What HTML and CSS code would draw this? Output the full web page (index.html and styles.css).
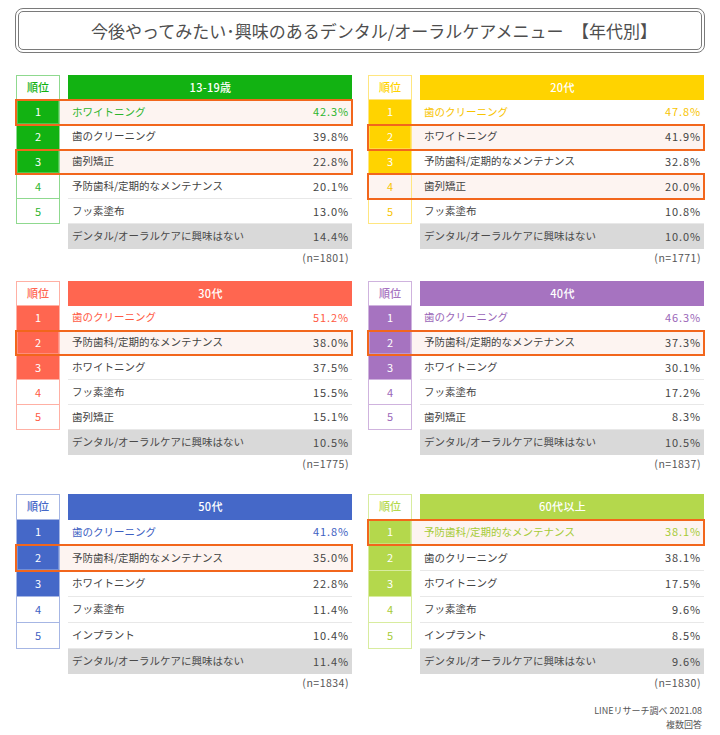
FILE: index.html
```html
<!DOCTYPE html>
<html lang="ja">
<head>
<meta charset="utf-8">
<title>今後やってみたい･興味のあるデンタル/オーラルケアメニュー【年代別】</title>
<link rel="stylesheet" href="styles.css">
</head>
<body>
<div class="page">
  <header class="title">今後やってみたい･興味のあるデンタル/オーラルケアメニュー　【年代別】</header>

  <main class="grid">
    <section class="tbl green">
      <div class="row head"><div class="rk">順位</div><div class="it">13-19歳</div></div>
      <div class="row top hl"><div class="rk f">1</div><div class="it"><span>ホワイトニング</span><span class="pc">42.3%</span></div></div>
      <div class="row"><div class="rk f">2</div><div class="it"><span>歯のクリーニング</span><span class="pc">39.8%</span></div></div>
      <div class="row hl"><div class="rk f">3</div><div class="it"><span>歯列矯正</span><span class="pc">22.8%</span></div></div>
      <div class="row"><div class="rk">4</div><div class="it"><span>予防歯科/定期的なメンテナンス</span><span class="pc">20.1%</span></div></div>
      <div class="row"><div class="rk">5</div><div class="it"><span>フッ素塗布</span><span class="pc">13.0%</span></div></div>
      <div class="row none"><div class="rk blank"></div><div class="it"><span>デンタル/オーラルケアに興味はない</span><span class="pc">14.4%</span></div></div>
      <p class="n">(n=1801)</p>
    </section>

    <section class="tbl yellow">
      <div class="row head"><div class="rk">順位</div><div class="it">20代</div></div>
      <div class="row top"><div class="rk f">1</div><div class="it"><span>歯のクリーニング</span><span class="pc">47.8%</span></div></div>
      <div class="row hl"><div class="rk f">2</div><div class="it"><span>ホワイトニング</span><span class="pc">41.9%</span></div></div>
      <div class="row"><div class="rk f">3</div><div class="it"><span>予防歯科/定期的なメンテナンス</span><span class="pc">32.8%</span></div></div>
      <div class="row hl"><div class="rk">4</div><div class="it"><span>歯列矯正</span><span class="pc">20.0%</span></div></div>
      <div class="row"><div class="rk">5</div><div class="it"><span>フッ素塗布</span><span class="pc">10.8%</span></div></div>
      <div class="row none"><div class="rk blank"></div><div class="it"><span>デンタル/オーラルケアに興味はない</span><span class="pc">10.0%</span></div></div>
      <p class="n">(n=1771)</p>
    </section>

    <section class="tbl coral">
      <div class="row head"><div class="rk">順位</div><div class="it">30代</div></div>
      <div class="row top"><div class="rk f">1</div><div class="it"><span>歯のクリーニング</span><span class="pc">51.2%</span></div></div>
      <div class="row hl"><div class="rk f">2</div><div class="it"><span>予防歯科/定期的なメンテナンス</span><span class="pc">38.0%</span></div></div>
      <div class="row"><div class="rk f">3</div><div class="it"><span>ホワイトニング</span><span class="pc">37.5%</span></div></div>
      <div class="row"><div class="rk">4</div><div class="it"><span>フッ素塗布</span><span class="pc">15.5%</span></div></div>
      <div class="row"><div class="rk">5</div><div class="it"><span>歯列矯正</span><span class="pc">15.1%</span></div></div>
      <div class="row none"><div class="rk blank"></div><div class="it"><span>デンタル/オーラルケアに興味はない</span><span class="pc">10.5%</span></div></div>
      <p class="n">(n=1775)</p>
    </section>

    <section class="tbl purple">
      <div class="row head"><div class="rk">順位</div><div class="it">40代</div></div>
      <div class="row top"><div class="rk f">1</div><div class="it"><span>歯のクリーニング</span><span class="pc">46.3%</span></div></div>
      <div class="row hl"><div class="rk f">2</div><div class="it"><span>予防歯科/定期的なメンテナンス</span><span class="pc">37.3%</span></div></div>
      <div class="row"><div class="rk f">3</div><div class="it"><span>ホワイトニング</span><span class="pc">30.1%</span></div></div>
      <div class="row"><div class="rk">4</div><div class="it"><span>フッ素塗布</span><span class="pc">17.2%</span></div></div>
      <div class="row"><div class="rk">5</div><div class="it"><span>歯列矯正</span><span class="pc">8.3%</span></div></div>
      <div class="row none"><div class="rk blank"></div><div class="it"><span>デンタル/オーラルケアに興味はない</span><span class="pc">10.5%</span></div></div>
      <p class="n">(n=1837)</p>
    </section>

    <section class="tbl blue tall">
      <div class="row head"><div class="rk">順位</div><div class="it">50代</div></div>
      <div class="row top"><div class="rk f">1</div><div class="it"><span>歯のクリーニング</span><span class="pc">41.8%</span></div></div>
      <div class="row hl"><div class="rk f">2</div><div class="it"><span>予防歯科/定期的なメンテナンス</span><span class="pc">35.0%</span></div></div>
      <div class="row"><div class="rk f">3</div><div class="it"><span>ホワイトニング</span><span class="pc">22.8%</span></div></div>
      <div class="row"><div class="rk">4</div><div class="it"><span>フッ素塗布</span><span class="pc">11.4%</span></div></div>
      <div class="row"><div class="rk">5</div><div class="it"><span>インプラント</span><span class="pc">10.4%</span></div></div>
      <div class="row none"><div class="rk blank"></div><div class="it"><span>デンタル/オーラルケアに興味はない</span><span class="pc">11.4%</span></div></div>
      <p class="n">(n=1834)</p>
    </section>

    <section class="tbl lime tall">
      <div class="row head"><div class="rk">順位</div><div class="it">60代以上</div></div>
      <div class="row top hl"><div class="rk f">1</div><div class="it"><span>予防歯科/定期的なメンテナンス</span><span class="pc">38.1%</span></div></div>
      <div class="row"><div class="rk f">2</div><div class="it"><span>歯のクリーニング</span><span class="pc">38.1%</span></div></div>
      <div class="row"><div class="rk f">3</div><div class="it"><span>ホワイトニング</span><span class="pc">17.5%</span></div></div>
      <div class="row"><div class="rk">4</div><div class="it"><span>フッ素塗布</span><span class="pc">9.6%</span></div></div>
      <div class="row"><div class="rk">5</div><div class="it"><span>インプラント</span><span class="pc">8.5%</span></div></div>
      <div class="row none"><div class="rk blank"></div><div class="it"><span>デンタル/オーラルケアに興味はない</span><span class="pc">9.6%</span></div></div>
      <p class="n">(n=1830)</p>
    </section>
  </main>

  <footer class="foot">
    <p>LINEリサーチ調べ 2021.08</p>
    <p>複数回答</p>
  </footer>
</div>
</body>
</html>
```

FILE: styles.css
```css
* { box-sizing: border-box; }

html, body {
  margin: 0;
  padding: 0;
  background: #ffffff;
}

body {
  font-family: "Noto Sans CJK JP", "Noto Sans", sans-serif;
  color: #444444;
  width: 720px;
  height: 735px;
  overflow: hidden;
}

.page {
  display: flex;
  flex-direction: column;
}

.title {
  margin: 8px 15px 0 15px;
  height: 45px;
  border: 4px double #7a7a7a;
  border-radius: 8px;
  display: flex;
  align-items: center;
  justify-content: center;
  font-size: 17px;
  color: #4e4e4e;
  padding-left: 28px;
}

.grid {
  margin-top: 22px;
  padding: 0 16px;
  display: grid;
  grid-template-columns: 336px 336px;
  column-gap: 16px;
  row-gap: 15px;
}

.tbl {
  display: flex;
  flex-direction: column;
}

.tbl.tall { margin-top: 7px; }

.green  { --c: #12b212; --l: #8fd98f; --t: #2db52d; }
.yellow { --c: #ffd300; --l: #ffe680; --t: #f8c400; }
.coral  { --c: #ff6650; --l: #ffb0a4; --t: #ff5a44; }
.purple { --c: #a673c0; --l: #cfb3de; --t: #9a66b8; }
.blue   { --c: #4568c8; --l: #a6b6e4; --t: #3d60c2; }
.lime   { --c: #b4d84c; --l: #d8ec9f; --t: #a6cb36; }

.row {
  display: grid;
  grid-template-columns: 44px 1fr;
  column-gap: 8px;
  height: 24.8px;
  font-size: 10.5px;
  line-height: 1;
}

.tall .row { height: 25.8px; }
.row.head { height: 25px; }
.tall .row.head { height: 26px; }

.rk {
  display: flex;
  align-items: center;
  justify-content: center;
  color: var(--t);
  font-size: 11px;
  border-left: 1px solid var(--l);
  border-right: 1px solid var(--l);
  border-bottom: 1px solid var(--l);
}

.head .rk {
  border-top: 1px solid var(--l);
  color: var(--c);
  font-weight: 500;
  font-size: 11px;
  background: #fff;
}

.rk.f {
  background: var(--c);
  color: #ffffff;
}

.rk.blank {
  border: none;
}

.it {
  display: flex;
  align-items: center;
  justify-content: space-between;
  padding: 0 3px 0 4px;
  border-bottom: 1px solid #e8e8e8;
  color: #444444;
}

.head .it {
  background: var(--c);
  color: #ffffff;
  justify-content: center;
  font-weight: 500;
  font-size: 11px;
  letter-spacing: 0.3px;
  border-bottom: none;
}

.pc {
  letter-spacing: 0.9px;
  font-size: 11px;
}

.top .it { color: var(--t); }

.none .it {
  background: #d9d9d9;
  border-bottom: none;
  color: #4a4a4a;
}

.row.hl {
  background: #fdf4f1;
  outline: 2px solid #f2661c;
  outline-offset: -1px;
  position: relative;
  z-index: 1;
}

.hl .rk.f {
  box-shadow: inset 0 0 0 1px rgba(255, 255, 255, 0.25);
}

.hl .rk { border-bottom-color: transparent; }

.n {
  margin: 1px 3px 0 0;
  text-align: right;
  font-size: 10.5px;
  line-height: 16px;
  color: #555555;
  letter-spacing: 0.5px;
}

.foot {
  margin-top: 13px;
  padding-right: 18px;
  text-align: right;
  font-size: 9px;
  color: #555555;
}

.foot p {
  margin: 0;
  line-height: 14px;
}
```
